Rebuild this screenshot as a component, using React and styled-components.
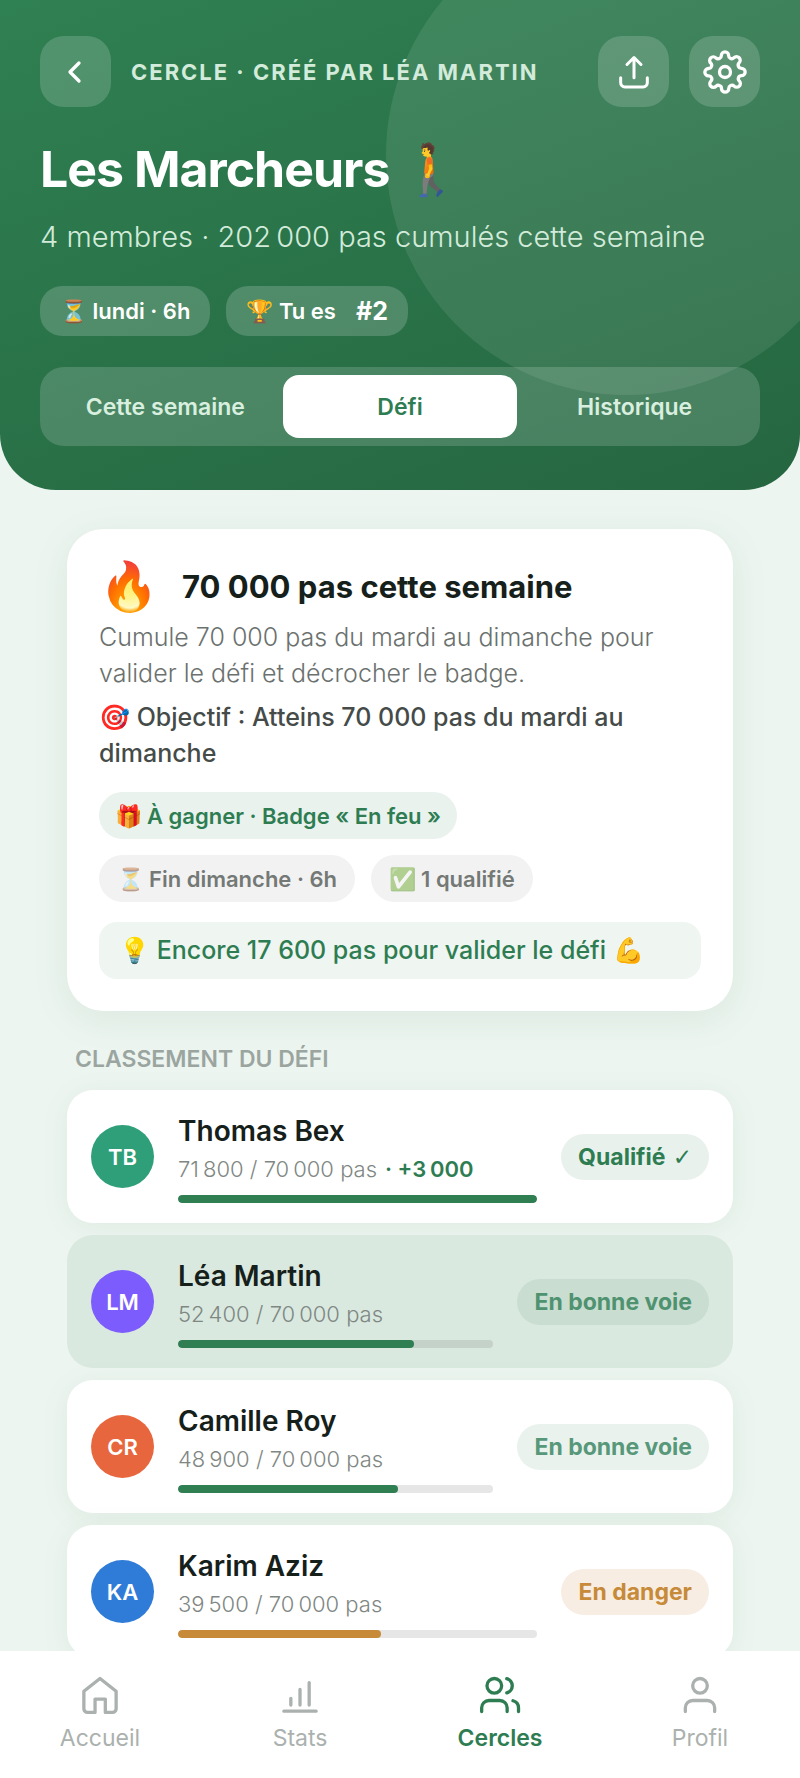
import React, { useState } from 'react'
import styled, { createGlobalStyle } from 'styled-components'

const GlobalStyle = createGlobalStyle`
  *, *::before, *::after {
    box-sizing: border-box;
  }
  body {
    margin: 0;
    background: #edf5f0;
    font-family: Inter, 'Noto Sans', sans-serif;
    color: #16201b;
  }
  h1, h2, h3, p, ul {
    margin: 0;
    padding: 0;
  }
  button {
    font-family: inherit;
    border: none;
    cursor: pointer;
  }
`;

const Screen = styled.div`
  display: flex;
  flex-direction: column;
  height: 100vh;
`;

const Content = styled.div`
  flex: 1;
  min-height: 0;
  overflow-y: auto;
  scrollbar-width: none;
`;

const Header = styled.header`
  position: relative;
  overflow: hidden;
  padding: 36px 40px 44px;
  border-radius: 0 0 56px 56px;
  background: linear-gradient(160deg, #2f8052 0%, #256640 100%);
  color: #fff;
  &::before {
    content: '';
    position: absolute;
    top: -85px;
    right: -66px;
    width: 480px;
    height: 480px;
    border-radius: 50%;
    background: rgba(255, 255, 255, 0.09);
  }
  > * {
    position: relative;
  }
`;

const TopBar = styled.div`
  display: flex;
  align-items: center;
  gap: 20px;
  p {
    flex: 1;
    font-size: 22px;
    font-weight: 700;
    letter-spacing: 2px;
    white-space: nowrap;
    text-transform: uppercase;
    color: #d3ebda;
  }
`;

const IconButton = styled.button`
  display: flex;
  align-items: center;
  justify-content: center;
  width: 71px;
  height: 71px;
  padding: 0;
  border-radius: 24px;
  background: rgba(255, 255, 255, 0.17);
  color: #fff;
`;

const Title = styled.h1`
  margin-top: 32px;
  font-size: 50px;
  line-height: 60px;
  font-weight: 700;
  letter-spacing: -1px;
  white-space: nowrap;
`;

const Subtitle = styled.p`
  margin-top: 20px;
  font-size: 29px;
  line-height: 36px;
  font-weight: 300;
  color: #d3ebda;
`;

const HeaderChips = styled.div`
  display: flex;
  gap: 16px;
  margin-top: 31px;
`;

const HeaderChip = styled.span`
  display: flex;
  align-items: center;
  height: 50px;
  padding: 0 20px;
  border-radius: 22px;
  background: rgba(255, 255, 255, 0.18);
  font-size: 22px;
  font-weight: 600;
  white-space: nowrap;
  b {
    margin-left: 20px;
    font-size: 25px;
    font-weight: 700;
  }
`;

const Tabs = styled.div`
  display: flex;
  margin-top: 31px;
  padding: 8px;
  border-radius: 24px;
  background: rgba(255, 255, 255, 0.16);
`;

const Tab = styled.button`
  flex: 1;
  height: 63px;
  padding: 0;
  border-radius: 16px;
  background: ${({ $active }) => ($active ? '#fff' : 'transparent')};
  color: ${({ $active }) => ($active ? '#2e7d52' : '#d9efdf')};
  font-size: 23px;
  font-weight: 600;
`;

const Main = styled.main`
  padding: 39px 67px 40px;
`;

const Challenge = styled.section`
  padding: 32px;
  border-radius: 36px;
  background: #fff;
  box-shadow: 0 8px 36px rgba(46, 125, 82, 0.1);
`;

const ChallengeHead = styled.div`
  display: flex;
  align-items: center;
  gap: 24px;
  height: 50px;
  span {
    width: 59px;
    text-align: center;
    font-size: 48px;
    line-height: 50px;
  }
  h2 {
    font-size: 31px;
    font-weight: 700;
    white-space: nowrap;
  }
`;

const Text = styled.p`
  margin-top: 8px;
  font-size: 25px;
  line-height: 36px;
  font-weight: ${({ $strong }) => ($strong ? 500 : 300)};
  color: ${({ $strong }) => ($strong ? '#454b48' : '#6b716e')};
`;

const Chips = styled.div`
  display: flex;
  flex-wrap: wrap;
  gap: 16px;
  margin-top: 21px;
  & + & {
    margin-top: 16px;
  }
`;

const Chip = styled.span`
  display: flex;
  align-items: center;
  height: 47px;
  padding: 0 ${({ $muted }) => ($muted ? 18 : 16)}px;
  border-radius: 24px;
  background: ${({ $muted }) => ($muted ? '#f2f2f2' : '#e9f2ed')};
  color: ${({ $muted }) => ($muted ? '#747976' : '#2e7d52')};
  font-size: 22px;
  font-weight: 600;
  white-space: nowrap;
  i {
    margin-right: 5px;
    font-style: normal;
    opacity: ${({ $muted }) => ($muted ? 0.55 : 1)};
  }
`;

const Tip = styled.p`
  margin-top: 20px;
  padding: 0 20px;
  border-radius: 18px;
  background: #eff5f1;
  color: #2e7d52;
  font-size: 25px;
  line-height: 57px;
  font-weight: 500;
  white-space: nowrap;
`;

const SectionTitle = styled.h2`
  margin: 32px 8px 15px;
  font-size: 23px;
  line-height: 32px;
  font-weight: 600;
  text-transform: uppercase;
  color: #9ba5a0;
`;

const Ranking = styled.ul`
  display: flex;
  flex-direction: column;
  gap: 12px;
  list-style: none;
`;

const Row = styled.li`
  display: flex;
  align-items: center;
  gap: 24px;
  height: 133px;
  padding: 0 24px;
  border-radius: 26px;
  background: ${({ $me }) => ($me ? '#d9e9df' : '#fff')};
  box-shadow: ${({ $me }) => ($me ? 'none' : '0 4px 28px rgba(46, 125, 82, 0.08)')};
`;

const Avatar = styled.span`
  display: flex;
  align-items: center;
  justify-content: center;
  flex-shrink: 0;
  width: 63px;
  height: 63px;
  border-radius: 50%;
  background: ${({ $color }) => $color};
  color: #fff;
  font-size: 22px;
  font-weight: 600;
`;

const Info = styled.div`
  flex: 1;
  min-width: 0;
  padding-top: 2px;
  h3 {
    font-size: 28px;
    line-height: 36px;
    font-weight: 600;
  }
  p {
    margin-top: 4px;
    font-size: 22px;
    line-height: 32px;
    font-weight: 300;
    white-space: nowrap;
    color: #7f8783;
  }
  strong {
    margin-left: 8px;
    font-weight: 600;
    color: #2e7d52;
  }
`;

const Track = styled.div`
  height: 8px;
  margin-top: 10px;
  border-radius: 4px;
  overflow: hidden;
  background: ${({ $me }) => ($me ? '#c4d2c9' : '#e6e6e6')};
`;

const Bar = styled.div`
  height: 100%;
  border-radius: 4px;
  background: ${({ $danger }) => ($danger ? '#c68a38' : '#2f7f52')};
`;

const tones = {
  done: ['#e9f1ed', '#2e7d52'],
  ok: ['#e9f2ed', '#58987a'],
  me: ['#c9ddd0', '#4f9270'],
  danger: ['#f8ede3', '#c68a38'],
}

const Badge = styled.span`
  height: 46px;
  padding: 0 17px;
  border-radius: 23px;
  background: ${({ $tone }) => tones[$tone][0]};
  color: ${({ $tone }) => tones[$tone][1]};
  font-size: 23px;
  line-height: 46px;
  font-weight: 700;
  white-space: nowrap;
  i {
    font-family: 'DejaVu Sans', sans-serif;
    font-style: normal;
    font-weight: 400;
  }
`;

const BottomNav = styled.nav`
  display: flex;
  flex-shrink: 0;
  height: 127px;
  padding-top: 22px;
  background: #fff;
`;

const NavLink = styled.a`
  flex: 1;
  display: flex;
  flex-direction: column;
  align-items: center;
  gap: 5px;
  color: ${({ $active }) => ($active ? '#2e7d52' : '#abb1ae')};
  font-size: 23px;
  line-height: 32px;
  font-weight: ${({ $active }) => ($active ? 600 : 400)};
  text-decoration: none;
`;

const Icon = ({ size = 44, width = 2, children }) => (
  <svg width={size} height={size} viewBox="0 0 24 24" fill="none" stroke="currentColor"
    strokeWidth={width} strokeLinecap="round" strokeLinejoin="round" aria-hidden="true">
    {children}
  </svg>
)

const members = [
  { initials: 'TB', name: 'Thomas Bex', steps: 71800, bonus: 3000, color: '#2f9f7a', status: 'Qualifié', tone: 'done' },
  { initials: 'LM', name: 'Léa Martin', steps: 52400, color: '#7c5cfc', status: 'En bonne voie', tone: 'me', me: true },
  { initials: 'CR', name: 'Camille Roy', steps: 48900, color: '#e8663d', status: 'En bonne voie', tone: 'ok' },
  { initials: 'KA', name: 'Karim Aziz', steps: 39500, color: '#2f7bd8', status: 'En danger', tone: 'danger' },
]

const goal = 70000

// thousands are split by a narrow no-break space
const format = n => String(n).replace(/(\d)(?=(\d{3})+$)/g, '$1\u202f')

const navItems = [
  { label: 'Accueil', icon: <path d="M3.200 10 12 3l8.800 7v9.500a2 2 0 0 1-2 2h-3.900v-7.300H9.300v7.300H5.200a2 2 0 0 1-2-2z" /> },
  { label: 'Stats', icon: <path d="M3.200 20.800h17.600M7 17.500v-3.700M12 17.500V9M17 17.500V5.200" /> },
  { label: 'Cercles', icon: <><circle cx="8.900" cy="7" r="4" /><path d="M2 21v-2a4 4 0 0 1 4-4h5.900a4 4 0 0 1 4 4v2M15.700 3.100a4 4 0 0 1 0 7.750M22.100 21v-2a4 4 0 0 0-3-3.870" /></> },
  { label: 'Profil', icon: <><circle cx="12" cy="7" r="4" /><path d="M4 21v-2a4 4 0 0 1 4-4h8a4 4 0 0 1 4 4v2" /></> },
]

const App = () => {
  const [tab, setTab] = useState('Défi')

  return (
    <Screen>
      <GlobalStyle />
      <Content>
        <Header>
          <TopBar>
            <IconButton aria-label="Retour">
              <Icon size={36} width={2.2}><path d="m14 6-6 6 6 6" /></Icon>
            </IconButton>
            <p>Cercle · créé par Léa Martin</p>
            <IconButton aria-label="Partager">
              <Icon size={40} width={1.8}><path d="M12 15.500V3.500M7.800 7.500l4.200-4.200 4.200 4.200M4 15.500V18.500a2.500 2.500 0 0 0 2.500 2.500h11a2.500 2.500 0 0 0 2.500-2.500V15.500" /></Icon>
            </IconButton>
            <IconButton aria-label="Réglages">
              <Icon size={44} width={1.8}>
                <circle cx="12" cy="12" r="3" />
                <path d="M19.400 15a1.650 1.650 0 0 0 .33 1.820l.06.06a2 2 0 1 1-2.830 2.830l-.06-.06a1.650 1.650 0 0 0-1.820-.33 1.650 1.650 0 0 0-1 1.510V21a2 2 0 0 1-4 0v-.09A1.650 1.650 0 0 0 9 19.400a1.650 1.650 0 0 0-1.820.33l-.06.06a2 2 0 1 1-2.830-2.830l.06-.06a1.650 1.650 0 0 0 .33-1.820 1.650 1.650 0 0 0-1.510-1H3a2 2 0 0 1 0-4h.09A1.650 1.650 0 0 0 4.600 9a1.650 1.650 0 0 0-.33-1.820l-.06-.06a2 2 0 1 1 2.830-2.830l.06.06a1.650 1.650 0 0 0 1.820.33H9a1.650 1.650 0 0 0 1-1.510V3a2 2 0 0 1 4 0v.09a1.650 1.650 0 0 0 1 1.510 1.650 1.650 0 0 0 1.820-.33l.06-.06a2 2 0 1 1 2.830 2.830l-.06.06a1.650 1.650 0 0 0-.33 1.820V9a1.650 1.650 0 0 0 1.510 1H21a2 2 0 0 1 0 4h-.09a1.650 1.650 0 0 0-1.510 1z" />
              </Icon>
            </IconButton>
          </TopBar>
          <Title>Les Marcheurs 🚶</Title>
          <Subtitle>4 membres · {format(202000)} pas cumulés cette semaine</Subtitle>
          <HeaderChips>
            <HeaderChip>⏳ lundi · 6h</HeaderChip>
            <HeaderChip>🏆 Tu es <b>#2</b></HeaderChip>
          </HeaderChips>
          <Tabs role="tablist">
            {['Cette semaine', 'Défi', 'Historique'].map(name => (
              <Tab key={name} role="tab" aria-selected={tab === name} $active={tab === name} onClick={() => setTab(name)}>
                {name}
              </Tab>
            ))}
          </Tabs>
        </Header>

        <Main>
          <Challenge>
            <ChallengeHead>
              <span>🔥</span>
              <h2>70 000 pas cette semaine</h2>
            </ChallengeHead>
            <Text>Cumule 70 000 pas du mardi au dimanche pour valider le défi et décrocher le badge.</Text>
            <Text $strong>🎯 Objectif : Atteins 70 000 pas du mardi au dimanche</Text>
            <Chips>
              <Chip><i>🎁</i>À gagner · Badge « En feu »</Chip>
            </Chips>
            <Chips>
              <Chip $muted><i>⏳</i>Fin dimanche · 6h</Chip>
              <Chip $muted><i>✅</i>1 qualifié</Chip>
            </Chips>
            <Tip>💡 Encore 17 600 pas pour valider le défi 💪</Tip>
          </Challenge>

          <SectionTitle>Classement du défi</SectionTitle>
          <Ranking>
            {members.map(member => (
              <Row key={member.initials} $me={member.me}>
                <Avatar $color={member.color}>{member.initials}</Avatar>
                <Info>
                  <h3>{member.name}</h3>
                  <p>
                    {format(member.steps)} / {format(goal)} pas
                    {member.bonus && <strong>· +{format(member.bonus)}</strong>}
                  </p>
                  <Track $me={member.me}>
                    <Bar $danger={member.tone === 'danger'} style={{ width: `${Math.min(100, (member.steps / goal) * 100)}%` }} />
                  </Track>
                </Info>
                <Badge $tone={member.tone}>{member.status}{member.tone === 'done' && <i> ✓</i>}</Badge>
              </Row>
            ))}
          </Ranking>
        </Main>
      </Content>

      <BottomNav>
        {navItems.map(item => (
          <NavLink key={item.label} href="#" $active={item.label === 'Cercles'}>
            <Icon width={1.8}>{item.icon}</Icon>
            {item.label}
          </NavLink>
        ))}
      </BottomNav>
    </Screen>
  )
}

export default App
